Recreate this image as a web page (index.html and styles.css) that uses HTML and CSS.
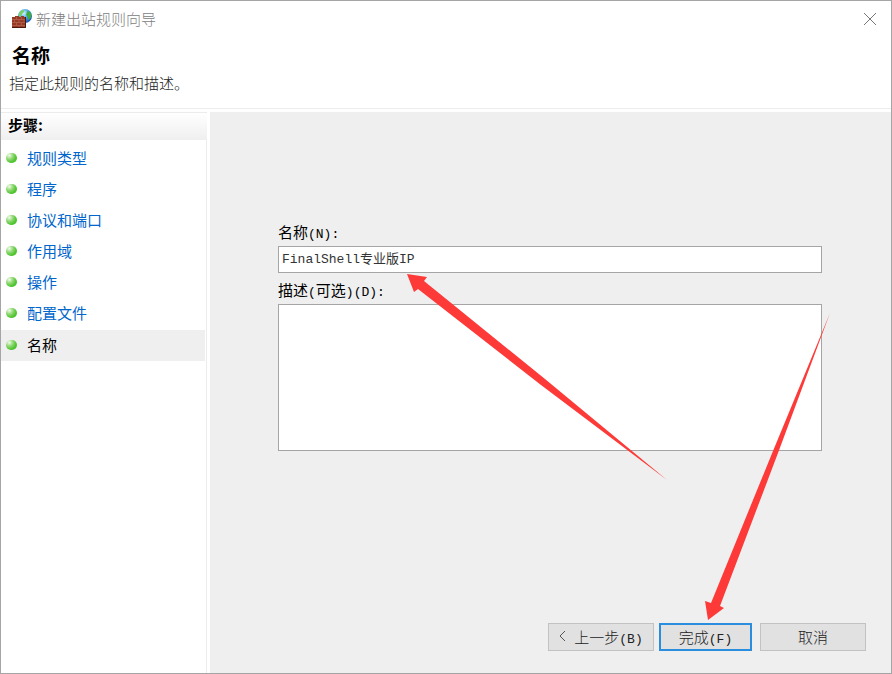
FILE: index.html
```html
<!DOCTYPE html>
<html lang="zh-CN">
<head>
    <meta charset="UTF-8">
    <meta name="viewport" content="width=device-width, initial-scale=1.0">
    <title>新建出站规则向导</title>
    <link rel="stylesheet" href="styles.css">
</head>
<body>
    <div class="window">
        <header class="header">
            <div class="titlebar">
                <svg class="app-icon" viewBox="0 0 20 20" aria-hidden="true">
                    <defs>
                        <radialGradient id="globe" cx="0.4" cy="0.3" r="0.75">
                            <stop offset="0" stop-color="#d4f6ff"/>
                            <stop offset="0.45" stop-color="#4fabec"/>
                            <stop offset="1" stop-color="#1247ae"/>
                        </radialGradient>
                    </defs>
                    <circle cx="13" cy="7" r="7" fill="url(#globe)"/>
                    <path d="M7 4 9.500 1.200 12.500 1 12 3 10 5 9 7.500 6.500 7.500Z" fill="#7bd06a"/>
                    <path d="M15.500 2 18 3 19.500 6 18.500 9 16.500 11 15.500 8 14 5.500Z" fill="#3fae3a"/>
                    <path d="M0 8h3V7h4v1h2V7h3v1h2v11H0Z" fill="#963a26"/>
                    <path d="M0 10.500h13M0 13.500h13M0 16.500h13M4.500 8v2.500M9.500 8v2.500M7 10.500v3M12 10.500v3M2.500 10.500v3M4.500 13.500v3M9.500 13.500v3M7 16.500V19M12 16.500V19" stroke="#c07462" stroke-width="0.5" fill="none"/>
                    <path d="M0 18.500h13.500V8" stroke="#4b170e" fill="none"/>
                </svg>
                <span class="window-title">新建出站规则向导</span>
                <button class="close" type="button" aria-label="关闭">
                    <svg viewBox="0 0 12 12"><path d="M0 0 12 12M12 0 0 12"/></svg>
                </button>
            </div>
            <h1>名称</h1>
            <p>指定此规则的名称和描述。</p>
        </header>

        <div class="body">
            <nav class="steps">
                <h2>步骤:</h2>
                <ul>
                    <li><a href="#">规则类型</a></li>
                    <li><a href="#">程序</a></li>
                    <li><a href="#">协议和端口</a></li>
                    <li><a href="#">作用域</a></li>
                    <li><a href="#">操作</a></li>
                    <li><a href="#">配置文件</a></li>
                    <li class="current"><a href="#" aria-current="step">名称</a></li>
                </ul>
            </nav>

            <form class="content">
                <div class="fields">
                    <label for="name">名称<span class="key">(N):</span></label>
                    <input type="text" id="name" value="FinalShell专业版IP">
                    <label for="description">描述<span class="key">(</span>可选<span class="key">)(D):</span></label>
                    <textarea id="description"></textarea>
                </div>
                <div class="buttons">
                    <button class="btn" type="button">
                        <svg class="chevron" viewBox="0 0 7 12" aria-hidden="true"><path d="M6 1 1 6 6 11"/></svg>
                        <span>上一步<span class="key">(B)</span></span>
                    </button>
                    <button class="btn primary" type="button"><span>完成<span class="key">(F)</span></span></button>
                    <button class="btn" type="button">取消</button>
                </div>
            </form>
        </div>

        <svg class="arrows" width="892" height="674" viewBox="0 0 892 674" aria-hidden="true">
            <path d="M407 274 427 277 424 281 545 379 667 480 541 385 418 289 414 292Z"/>
            <path d="M708 620 705 601 711 603 773 451 830 313 778 453 720 606 724 608Z"/>
        </svg>
    </div>
</body>
</html>
```
FILE: styles.css
```css
* {
    box-sizing: border-box;
}
body {
    margin: 0;
    font-family: "Noto Sans CJK SC", sans-serif;
    font-size: 15px;
    line-height: 20px;
    color: #000;
}
.window {
    position: relative;
    display: flex;
    flex-direction: column;
    min-height: 100vh;
    background: #fff;
    border: 1px solid #a5a5a5;
}
.header {
    height: 108px;
    border-bottom: 1px solid #ececec;
}
.titlebar {
    display: flex;
    align-items: center;
    height: 36px;
    padding: 0 15px 0 11px;
}
.app-icon {
    width: 20px;
    height: 20px;
    margin-right: 4px;
}
.window-title {
    flex: 1;
    color: #808080;
    font-weight: 300;
}
.close {
    display: flex;
    padding: 0;
    background: none;
    border: 0;
}
.close svg {
    width: 12px;
    height: 12px;
    overflow: visible;
    stroke: #777;
    fill: none;
}
h1 {
    margin: 6px 0 6px 11px;
    font-size: 19px;
    line-height: 24px;
}
p {
    margin: 0 0 0 8px;
    font-size: 15px;
    font-weight: 300;
    color: #222;
}
.body {
    flex: 1;
    display: flex;
    padding-top: 3px;
}
.steps {
    width: 209px;
    flex-shrink: 0;
    background: linear-gradient(#ececec, #ececec) 205px 0 / 1px 100% no-repeat;
}
h2 {
    margin: 0 3px 4px 0;
    padding: 2px 7px 5px;
    font-size: 15px;
    border-top: 1px solid #ececec;
    background: linear-gradient(#fff, #efefef);
}
ul {
    margin: 0;
    padding: 0 5px 0 0;
    list-style: none;
}
li {
    display: flex;
    align-items: center;
    height: 31px;
    padding: 0 0 4px 5px;
}
li::before {
    content: "";
    width: 11px;
    height: 10px;
    margin-right: 10px;
    border-radius: 5px;
    background: radial-gradient(circle at 30% 25%, #f2fbec, #8fd873 35%, #4fc52f 65%, #5cb842);
}
li a {
    color: #0066cc;
    text-decoration: none;
}
.current {
    padding-bottom: 2px;
    background: #efefef;
}
.current a {
    color: #000;
}
.content {
    flex: 1;
    display: flex;
    flex-direction: column;
    justify-content: space-between;
    padding: 110px 25px 22px 68px;
    background: #efefef;
}
.fields {
    display: flex;
    flex-direction: column;
    margin-right: 44px;
}
label {
    height: 20px;
    margin-bottom: 4px;
}
.key {
    font-family: "Liberation Mono", monospace;
    font-size: 13px;
    line-height: 1;
}
input,
textarea {
    margin: 0;
    border: 1px solid #a5a5a5;
    border-radius: 0;
    background: #fff;
    color: #333;
    font-family: "Liberation Mono", "Noto Sans CJK SC", monospace;
    font-size: 13px;
}
input {
    height: 27px;
    padding: 0 3px 4px;
    margin-bottom: 7px;
}
textarea {
    height: 147px;
    resize: none;
}
.buttons {
    display: flex;
    justify-content: flex-end;
}
.btn {
    display: flex;
    align-items: center;
    justify-content: center;
    width: 106px;
    height: 28px;
    padding: 0 0 2px;
    border: 1px solid #c2c2c2;
    background: #e1e1e1;
    color: #222;
    font-family: inherit;
    font-size: 15px;
    font-weight: 300;
}
.primary {
    width: 93px;
    margin: 0 8px 0 5px;
    border: 2px solid #2b8ddd;
}
.chevron {
    width: 7px;
    height: 12px;
    margin-right: 8px;
    stroke: #555;
    fill: none;
}
.arrows {
    position: absolute;
    top: -1px;
    left: -1px;
    fill: #fd3a38;
    pointer-events: none;
}
```
